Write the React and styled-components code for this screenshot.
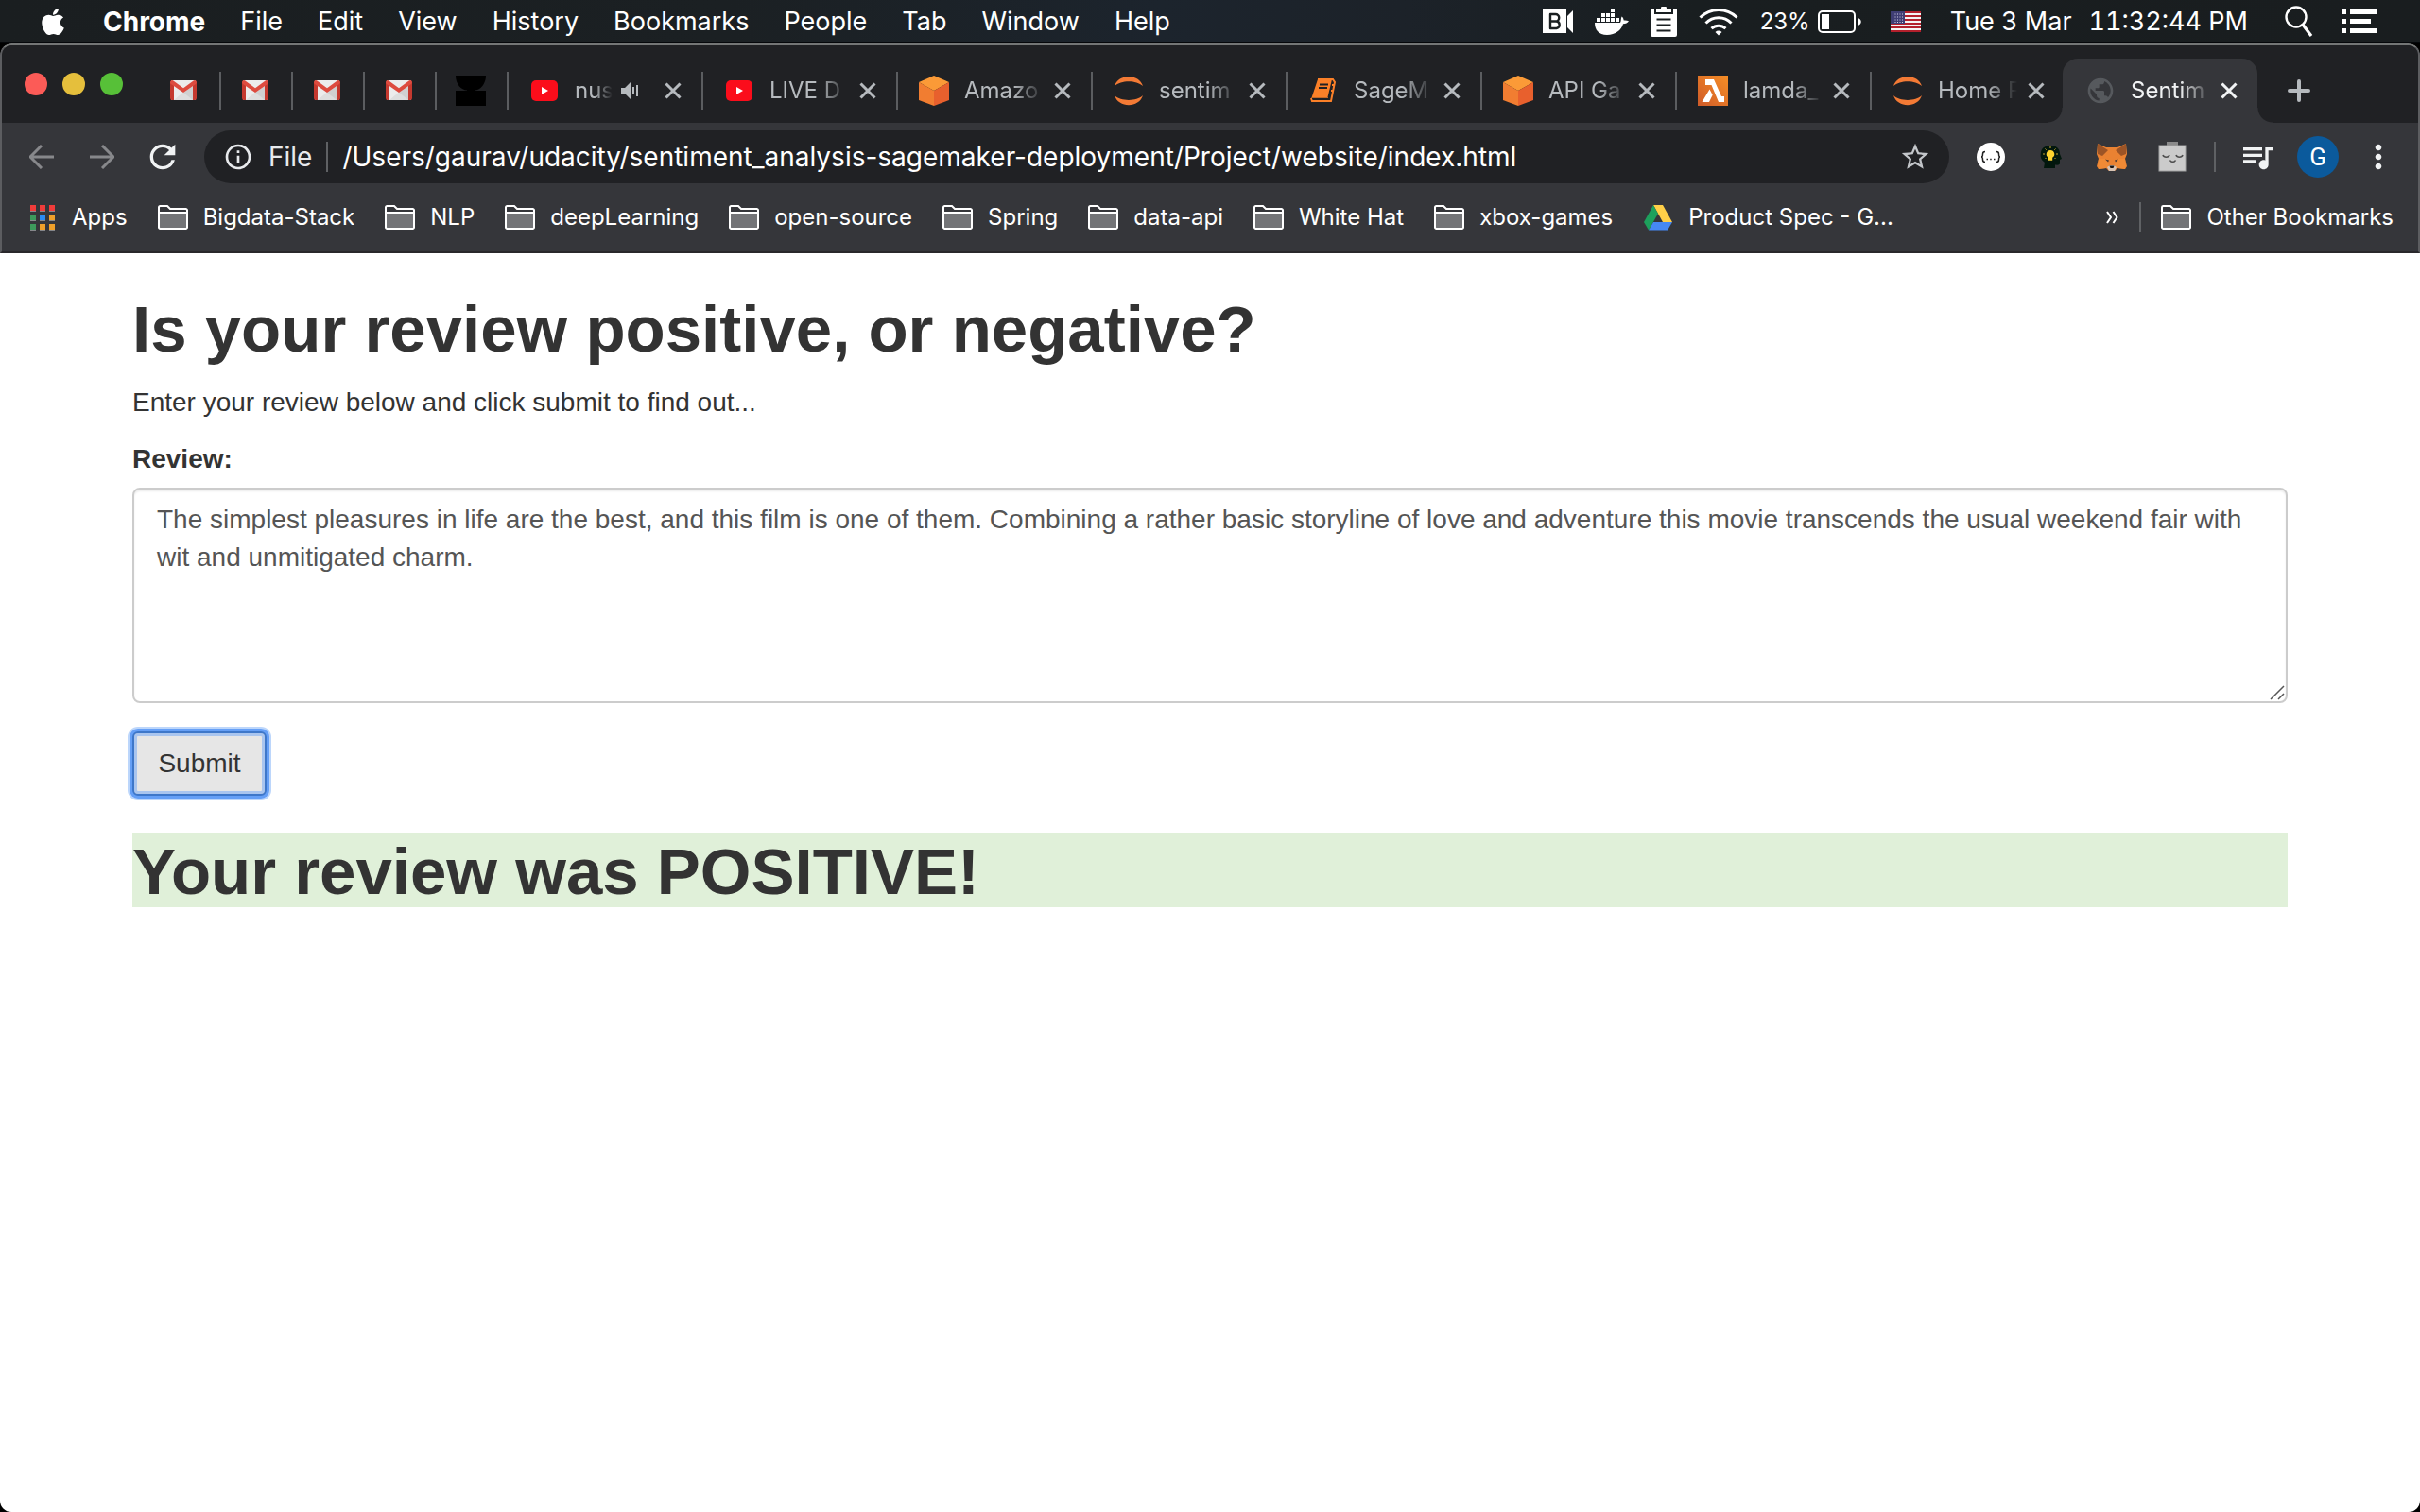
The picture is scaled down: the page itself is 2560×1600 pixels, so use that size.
import React, { useState } from "react";
import styled, { createGlobalStyle, css } from "styled-components";
import { FaApple } from "react-icons/fa";
import { MdInfoOutline, MdMoreVert, MdPublic, MdQueueMusic, MdRefresh, MdStarBorder } from "react-icons/md";

const GlobalStyle = createGlobalStyle`
  *, *::before, *::after { box-sizing: border-box; }
  body { margin: 0; background: #000; }
  svg { display: block; flex: none; }
`;

const uiFont = `Inter, Roboto, "Noto Sans", sans-serif`;
const pageFont = `"Liberation Sans", Arial, sans-serif`;

/* ---------- Desktop and menu bar ---------- */

const Desktop = styled.div`
  display: flex;
  flex-direction: column;
  min-height: 100vh;
  font-family: ${uiFont};
`;

const MenuBar = styled.header`
  display: flex;
  align-items: center;
  justify-content: space-between;
  height: 46px;
  padding: 2px 46px 0 40px;
  color: #fff;
  background: linear-gradient(90deg, #1a1e20 0%, #1b2023 30%, #1c242d 48%, #1c2229 58%, #191e20 70%, #191d1f 100%);
  border-bottom: 2px solid #05070a;
`;

const MenuList = styled.nav`
  display: flex;
  align-items: center;
  gap: 37px;
`;

const MenuItem = styled.button`
  padding: 0;
  border: 0;
  background: none;
  color: inherit;
  font: ${(p) => (p.$strong ? "700 28px" : "400 27px")} / 40px ${uiFont};
`;

const StatusArea = styled.div`
  display: flex;
  align-items: center;
  gap: 31px;
`;

const StatusIcons = styled.div`
  display: flex;
  align-items: center;
  gap: 23px;
`;

const Battery = styled.div`
  display: flex;
  align-items: center;
  gap: 8px;
  font-size: 24px;
  line-height: 40px;
`;

const Clock = styled.div`
  display: flex;
  gap: 18px;
  padding-right: 8px;
  font-size: 27px;
  line-height: 40px;
  font-variant-numeric: tabular-nums;
`;

/* ---------- Browser chrome ---------- */

const BrowserWindow = styled.div`
  flex: 1;
  display: flex;
  flex-direction: column;
  border-radius: 12px;
  overflow: hidden;
`;

const BrowserHead = styled.div`
  border: 2px solid #5c5d60;
  border-top-color: #747676;
  border-bottom-color: #29282b;
  border-radius: 12px 12px 0 0;
  background: #35363a;
  overflow: hidden;
`;

const TabStrip = styled.div`
  display: flex;
  align-items: flex-end;
  height: 82px;
  padding-left: 24px;
  background: #202124;
`;

const TrafficLights = styled.div`
  display: flex;
  gap: 16px;
  width: 132px;
  padding-bottom: 29px;
`;

const Light = styled.button`
  width: 24px;
  height: 24px;
  padding: 0;
  border: 0;
  border-radius: 50%;
  background: ${(p) => p.$color};
`;

const TabBase = styled.div`
  display: flex;
  align-items: center;
  flex: none;
  height: 68px;
  color: #b6babe;

  &::after {
    content: "";
    width: 2px;
    height: 40px;
    margin-left: auto;
    background: ${(p) => (p.$noDivider ? "transparent" : "#5b5d60")};
  }
`;

const PinnedTab = styled(TabBase)`
  width: 76px;
  padding-left: 20px;
`;

const Tab = styled(TabBase)`
  width: 206px;
  padding-left: 22px;
  ${(p) =>
    p.$active &&
    css`
      position: relative;
      margin-left: -4px;
      padding-left: 24px;
      color: #f1f3f4;
      background: #35363a;
      border-radius: 16px 16px 0 0;
    `}
`;

const TabFoot = styled.span`
  position: absolute;
  bottom: 0;
  ${(p) => p.$side}: -16px;
  width: 16px;
  height: 16px;
  background: radial-gradient(circle at ${(p) => (p.$side === "left" ? "0 0" : "100% 0")}, transparent 15px, #35363a 16px);
`;

const TabIcon = styled.span`
  display: flex;
  align-items: center;
  justify-content: center;
  width: 32px;
  height: 32px;
  flex: none;
`;

const TabTitle = styled.span`
  width: ${(p) => (p.$short ? 40 : 84)}px;
  margin-left: 16px;
  overflow: hidden;
  white-space: nowrap;
  font-size: 24px;
  line-height: 32px;
  mask-image: linear-gradient(90deg, #000 calc(100% - ${(p) => (p.$short ? 20 : 32)}px), transparent);
`;

const TabSound = styled.span`
  display: flex;
  justify-content: center;
  width: 44px;
  padding-right: 6px;
`;

const IconButton = styled.button`
  display: flex;
  align-items: center;
  justify-content: center;
  flex: none;
  width: ${(p) => p.$size || 64}px;
  height: 56px;
  padding: 0;
  border: 0;
  background: none;
  color: inherit;
`;

const NewTabButton = styled(IconButton)`
  height: 68px;
`;

const Toolbar = styled.div`
  display: flex;
  align-items: center;
  height: 72px;
  padding: 0 10px;
  color: #f1f3f4;
`;

const AddressBar = styled.form`
  flex: 1;
  display: flex;
  align-items: center;
  height: 56px;
  margin: 0 12px;
  padding: 0 4px 0 20px;
  border-radius: 28px;
  background: #202124;
  color: #e8eaed;
`;

const AddressLabel = styled.label`
  margin-left: 16px;
  font-size: 28px;
  line-height: 40px;
`;

const Divider = styled.span`
  flex: none;
  width: 2px;
  height: 32px;
  margin: 0 ${(p) => p.$gap}px;
  background: #5f6164;
`;

const AddressInput = styled.input`
  flex: 1;
  min-width: 0;
  padding: 0;
  border: 0;
  outline: 0;
  background: none;
  color: #fff;
  font: 400 28px / 40px ${uiFont};
`;

const Avatar = styled.span`
  display: flex;
  align-items: center;
  justify-content: center;
  width: 44px;
  height: 44px;
  border-radius: 50%;
  background: #0b5a9c;
  color: #fff;
  font: 400 26px / 44px Roboto, sans-serif;
`;

const BookmarkBar = styled.nav`
  display: flex;
  align-items: center;
  justify-content: space-between;
  height: 64px;
  padding: 0 26px 8px 30px;
  color: #fff;
`;

const BookmarkGroup = styled.div`
  display: flex;
  align-items: center;
  gap: ${(p) => p.$gap || 32}px;
`;

const Bookmark = styled.a`
  display: flex;
  align-items: center;
  gap: 16px;
  color: inherit;
  text-decoration: none;
  white-space: nowrap;
  font-size: 24px;
  line-height: 32px;
`;

/* ---------- Web page ---------- */

const Page = styled.main`
  flex: 1;
  padding: 40px 140px;
  background: #fff;
  color: #333;
  font: 400 28px / 40px ${pageFont};
`;

const Heading = styled.h1`
  margin: 0 0 20px;
  padding-top: 4px;
  font-size: 69px;
  line-height: 74px;
  font-weight: 700;
`;

const Result = styled(Heading)`
  margin-top: 40px;
  background: #e0f0d9;
`;

const Intro = styled.p`
  margin: 0 0 20px;
`;

const ReviewForm = styled.form`
  display: flex;
  flex-direction: column;
  align-items: flex-start;
`;

const FieldLabel = styled.label`
  margin-bottom: 10px;
  font-weight: 700;
`;

const ReviewField = styled.div`
  position: relative;
  width: 100%;
  margin-bottom: 30px;
`;

const ReviewBox = styled.textarea`
  display: block;
  width: 100%;
  padding: 12px 24px;
  border: 2px solid #ccc;
  border-radius: 8px;
  outline: 0;
  resize: none;
  background: #fff;
  color: #555;
  font: inherit;
  box-shadow: inset 0 2px 2px rgba(0, 0, 0, 0.075);
`;

const ResizeGrip = styled.svg`
  position: absolute;
  right: 3px;
  bottom: 3px;
`;

const SubmitButton = styled.button`
  min-width: 142px;
  padding: 12px 22px;
  border: 2px solid #3e77c9;
  border-radius: 6px;
  background: #e6e6e6;
  color: #333;
  font: inherit;
  box-shadow: 0 0 0 3px #659ff6, 0 0 0 5px #bcd6fb, inset 0 0 0 3px #a9c5ef;
`;

/* ---------- Icons ---------- */

const CamIcon = () => (
  <svg width="32" height="26" viewBox="0 0 32 26" fill="none">
    <path d="M0 0h25v25H0z" fill="#fff" />
    <path d="M32 1v24l-6-6V7z" fill="#fff" />
    <path d="M8 5h5.500a3.600 3.600 0 0 1 0 7.500H8zM8 12.500h6.500a3.800 3.800 0 0 1 0 7.500H8z" stroke="#1a1f21" strokeWidth="2.400" strokeLinejoin="round" />
  </svg>
);

const DockerIcon = () => (
  <svg width="36" height="28" viewBox="0 0 36 28" fill="#fff">
    <path d="M0 15h27c1-2 .5-4 1.500-6.500 1.500 1 2 2.500 2.200 4 1.800-.3 3.500 0 5.300.8-1.200 2-3.200 3-6 3C28 23 22 28 13 28 4 28 0 22.500 0 15z" />
    <path d="M2 10h4v4H2zM7 10h4v4H7zM12 10h4v4h-4zM17 10h4v4h-4zM22 10h4v4h-4zM7 5h4v4H7zM12 5h4v4h-4zM17 5h4v4h-4zM17 0h4v4h-4z" />
  </svg>
);

const ClipboardIcon = () => (
  <svg width="28" height="32" viewBox="0 0 28 32">
    <path d="M0 3h4v5h20V3h4v27a2 2 0 0 1-2 2H2a2 2 0 0 1-2-2z" fill="#fff" />
    <path d="M6 2h5a3 3 0 0 1 6 0h5v4H6z" fill="#fff" />
    <path d="M6.500 13.500h15M6.500 19.500h15M6.500 25.500h15" stroke="#1a1f21" strokeWidth="2" />
  </svg>
);

const WifiIcon = () => (
  <svg width="42" height="30" viewBox="0 0 42 30" fill="none" stroke="#fff" strokeWidth="3">
    <path d="M1.500 10.500a27.500 27.500 0 0 1 39 0M7.500 16.500a19 19 0 0 1 27 0M13.500 22.200a11 11 0 0 1 15 0" />
    <path d="M17.500 26a5 5 0 0 1 7 0L21 29.500z" fill="#fff" stroke="none" />
  </svg>
);

const BatteryIcon = () => (
  <svg width="46" height="24" viewBox="0 0 46 24">
    <rect x="1" y="1" width="38" height="22" rx="4" fill="none" stroke="#fff" strokeWidth="2" />
    <path d="M4 4h8v16H4zM42 8c5 1 5 7 0 8z" fill="#fff" />
  </svg>
);

const FlagIcon = () => (
  <svg width="32" height="22" viewBox="0 0 32 22">
    <rect width="32" height="22" fill="#f4f4f4" />
    <path d="M0 1h32M0 5h32M0 9h32M0 13h32M0 17h32M0 21h32" stroke="#b3202c" strokeWidth="2" />
    <rect width="15" height="13" fill="#3f3d73" />
    <path d="M2 3h12M2 6h12M2 9h12M2 11.500h12" stroke="#d5d4e6" strokeWidth="1" strokeDasharray="1 1.500" />
  </svg>
);

const SearchIcon = () => (
  <svg width="30" height="36" viewBox="0 0 30 36" fill="none" stroke="#fff">
    <circle cx="12" cy="13" r="10.500" strokeWidth="2.400" />
    <path d="M19 21l9 12" strokeWidth="3.200" />
  </svg>
);

const ListIcon = () => (
  <svg width="36" height="26" viewBox="0 0 36 26" fill="#fff">
    <path d="M0 0h4v5H0zM8 0h28v5H8zM0 10h4v5H0zM8 10h22v5H8zM0 20h4v5H0zM8 20h28v5H8z" />
  </svg>
);

const GmailIcon = () => (
  <svg width="28" height="22" viewBox="0 0 28 22">
    <rect x="1" width="26" height="21" rx="1" fill="#ececec" />
    <path d="M4 21l10-8.500L24 21z" fill="#dedede" />
    <path d="M14 13l10-7v15z" fill="#d0d0d0" />
    <path d="M0 2v17a2 2 0 0 0 2 2h2V5zM28 2v17a2 2 0 0 1-2 2h-2V5z" fill="#c5392f" />
    <path d="M0 2A2 2 0 0 1 3 .3L14 8.300 25 .3a2 2 0 0 1 3 1.700c0 1-.3 1.500-1 2L14 13 1 4C.3 3.500 0 3 0 2z" fill="#dd4b3f" />
  </svg>
);

const DarkIcon = () => (
  <svg width="32" height="32" viewBox="0 0 32 32">
    <path d="M0 0h32c0 9-6 15.500-12 15.500V16h12v16H0V16h12v-.5C6 15.500 0 9 0 0z" fill="#000" />
  </svg>
);

const YouTubeIcon = () => (
  <svg width="28" height="22" viewBox="0 0 28 22">
    <rect width="28" height="22" rx="5" fill="#fb0d1b" />
    <path d="M11 7l7 4-7 4z" fill="#fff" />
  </svg>
);

const CubeIcon = () => (
  <svg width="32" height="32" viewBox="0 0 32 32">
    <path d="M16 0l16 7-16 9L0 7z" fill="#fb9a37" />
    <path d="M0 7l16 9v16L0 26z" fill="#f17d31" />
    <path d="M32 7l-16 9v16l16-6z" fill="#e8602d" />
  </svg>
);

const JupyterIcon = () => (
  <svg width="32" height="32" viewBox="0 0 32 32" fill="#f37a35">
    <path d="M1 11C5-2.500 27-2.500 31 11 24 4.500 8 4.500 1 11zM1 21c4 13.500 26 13.500 30 0-7 6.500-23 6.500-30 0z" />
  </svg>
);

const NotebookIcon = () => (
  <svg width="28" height="26" viewBox="0 0 28 26">
    <path d="M8 1h15l-5 21H1z" fill="#fb8028" />
    <path d="M8 1h16l2 3-4 20H2l-1-3M19 21H4M25 7h-2M24 13h-2" fill="none" stroke="#fb8028" strokeWidth="2" />
    <path d="M10 6.500h9M9 10h9" stroke="#202124" strokeWidth="2" />
    <path d="M2 21.500h18" stroke="#202124" strokeWidth="1.500" />
  </svg>
);

const LambdaIcon = () => (
  <svg width="32" height="32" viewBox="0 0 32 32">
    <defs>
      <linearGradient id="lambda-fill" x1="0" y1="1" x2="1" y2="0">
        <stop offset="0" stopColor="#cf5b29" />
        <stop offset="1" stopColor="#f68e26" />
      </linearGradient>
    </defs>
    <rect width="32" height="32" fill="url(#lambda-fill)" />
    <path d="M8 4h9l8 18h3v6h-6L14.500 10H8zM12.500 14.500l3.200 6L12 28H4.500z" fill="#fff" />
  </svg>
);

const SoundIcon = () => (
  <svg width="20" height="18" viewBox="0 0 20 18" fill="#b6babe">
    <path d="M0 6h4l6-6v18l-6-6H0zM12 5h2v8h-2zM16 3h2v12h-2z" />
  </svg>
);

const CloseIcon = () => (
  <svg width="18" height="18" viewBox="0 0 18 18" stroke="currentColor" strokeWidth="3">
    <path d="M1.500 1.500l15 15M16.500 1.500l-15 15" />
  </svg>
);

const PlusIcon = () => (
  <svg width="24" height="24" viewBox="0 0 24 24" stroke="#b6babe" strokeWidth="4" strokeLinecap="round">
    <path d="M12 2v20M2 12h20" />
  </svg>
);

const ArrowIcon = ({ forward }) => (
  <svg width="26" height="26" viewBox="0 0 26 26" fill="none" stroke="#87888b" strokeWidth="3">
    <path d={forward ? "M0 13h24M13 1l12 12-12 12" : "M26 13H2M13 1L1 13l12 12"} />
  </svg>
);

const BracesIcon = () => (
  <svg width="32" height="32" viewBox="0 0 32 32" fill="none" stroke="#222" strokeWidth="1.500">
    <circle cx="16" cy="16" r="15" fill="#fff" stroke="none" />
    <path d="M10 10.500c-2 0-2.500.8-2.500 2.500s-.3 3-1.500 3c1.200 0 1.500 1.300 1.500 3s.5 2.500 2.500 2.500M22 10.500c2 0 2.500.8 2.500 2.500s.3 3 1.500 3c-1.200 0-1.500 1.300-1.500 3s-.5 2.500-2.500 2.500" />
    <path d="M11.500 18.500h1.500M15.200 18.500h1.500M19 18.500h1.500" />
  </svg>
);

const IdeaIcon = () => (
  <svg width="32" height="32" viewBox="0 0 32 32">
    <path d="M8 28l1-6c-4-3-5-6-4-11C6 6 10 4 15 4c6 0 10 3 10 9l2 5-2 1v4c0 1-1 2-5 1.500V28z" fill="#02170d" />
    <path d="M15 9a4.200 4.200 0 0 1 2.200 7.800v3h-4.400v-3A4.200 4.200 0 0 1 15 9z" fill="#fdd32f" />
    <path d="M15 5v2M9.500 7.500l1.200 1.200M20.500 7.500l-1.200 1.200M7 13h2M21 13h2M9.500 18l1-1M20.500 18l-1-1" stroke="#c9a92a" strokeWidth="1" />
  </svg>
);

const FoxIcon = () => (
  <svg width="32" height="30" viewBox="0 0 32 30">
    <path d="M1 1l9 4h12l9-4 1 11-2 5 2 8-2 3-8-1-3 3h-6l-3-3-8 1-2-3 2-8-2-5z" fill="#ea8232" />
    <path d="M1 1l11 7-6 6-5-2zM31 1l-11 7 6 6 5-2z" fill="#9c5426" />
    <path d="M2 17h9l2 7-3 3-8 1-1-4zM30 17h-9l-2 7 3 3 8 1 1-4z" fill="#f08a35" />
    <path d="M9 17.500l4 1-1 2zM23 17.500l-4 1 1 2z" fill="#4b3a33" />
    <path d="M11 26l3-2h4l3 2-2 4h-6z" fill="#d8c4b5" />
    <path d="M13.500 24.500h5l-1 2.500h-3z" fill="#1a1614" />
  </svg>
);

const RobotIcon = () => (
  <svg width="30" height="32" viewBox="0 0 30 32" fill="none">
    <path d="M9 0h12v5H9z" fill="#8b8b8b" />
    <rect x="1" y="4" width="28" height="27" fill="#cbcbcb" stroke="#a2a2a2" />
    <path d="M5 14c1 3 6 3 7 0M19 14c1 3 6 3 7 0M12.500 19.500c1 2.500 5 2.500 6 0" stroke="#4e4e4e" strokeWidth="1.600" />
  </svg>
);

const AppsIcon = () => {
  const colors = ["#f03c3a", "#f03c3a", "#f03c3a", "#3d9a5b", "#2c8bf2", "#efa02a", "#3d9a5b", "#efa02a", "#efa02a"];
  return (
    <svg width="28" height="27" viewBox="0 0 28 27">
      {colors.map((color, i) => (
        <g key={i}>
          <rect x={(i % 3) * 10} y={Math.floor(i / 3) * 10} width="6" height="7" fill="#85868a" />
          <rect x={(i % 3) * 10} y={Math.floor(i / 3) * 10} width="6" height="6" fill={color} />
        </g>
      ))}
    </svg>
  );
};

const FolderIcon = () => (
  <svg width="32" height="26" viewBox="0 0 32 26">
    <path d="M1 8V2.500A1.500 1.500 0 0 1 2.500 1H10l3 3h16.500A1.500 1.500 0 0 1 31 5.500V8z" fill="#35363a" stroke="#fff" strokeWidth="2" />
    <path d="M1 8h30v15.500a1.500 1.500 0 0 1-1.500 1.500h-27A1.500 1.500 0 0 1 1 23.500z" fill="#737477" stroke="#fff" strokeWidth="2" />
  </svg>
);

const DriveIcon = () => (
  <svg width="32" height="28" viewBox="0 0 32 28">
    <path d="M11 1h10l10 18H21z" fill="#ffcf48" />
    <path d="M11 1l5 9L6 27.500 1 19z" fill="#1da05c" />
    <path d="M11 19h20l-5 8.500H6z" fill="#4688f4" />
  </svg>
);

const MoreIcon = () => (
  <svg width="14" height="14" viewBox="0 0 14 14" fill="none" stroke="#fff" strokeWidth="2">
    <path d="M1 1l4 6-4 6M7.500 1l4 6-4 6" />
  </svg>
);

/* ---------- Data ---------- */

const menus = ["File", "Edit", "View", "History", "Bookmarks", "People", "Tab", "Window", "Help"];

const pinned = [
  ["Inbox 1", GmailIcon],
  ["Inbox 2", GmailIcon],
  ["Inbox 3", GmailIcon],
  ["Inbox 4", GmailIcon],
  ["Pinned", DarkIcon],
];

const tabs = [
  { title: "nus", icon: YouTubeIcon, playing: true },
  { title: "LIVE D", icon: YouTubeIcon },
  { title: "Amazo", icon: CubeIcon },
  { title: "sentim", icon: JupyterIcon },
  { title: "SageM", icon: NotebookIcon },
  { title: "API Ga", icon: CubeIcon },
  { title: "lamda_", icon: LambdaIcon },
  { title: "Home P", icon: JupyterIcon, noDivider: true },
  { title: "Sentim", icon: () => <MdPublic size={32} color="#56595d" />, active: true, noDivider: true },
];

const bookmarks = [
  ["Apps", AppsIcon],
  ["Bigdata-Stack", FolderIcon],
  ["NLP", FolderIcon],
  ["deepLearning", FolderIcon],
  ["open-source", FolderIcon],
  ["Spring", FolderIcon],
  ["data-api", FolderIcon],
  ["White Hat", FolderIcon],
  ["xbox-games", FolderIcon],
  ["Product Spec - G...", DriveIcon],
];

const extensions = [
  ["JSON viewer", BracesIcon],
  ["Ideas", IdeaIcon],
  ["Wallet", FoxIcon],
  ["Assistant", RobotIcon],
];

const initialUrl = "/Users/gaurav/udacity/sentiment_analysis-sagemaker-deployment/Project/website/index.html";
const initialReview =
  "The simplest pleasures in life are the best, and this film is one of them. Combining a rather basic storyline of love and adventure this movie transcends the usual weekend fair with wit and unmitigated charm.";

/* ---------- Sections ---------- */

const SystemMenu = () => (
  <MenuBar>
    <MenuList>
      <MenuItem aria-label="Apple menu">
        <FaApple size={32} />
      </MenuItem>
      <MenuItem $strong>Chrome</MenuItem>
      {menus.map((name) => (
        <MenuItem key={name}>{name}</MenuItem>
      ))}
    </MenuList>
    <StatusArea>
      <StatusIcons>
        <CamIcon />
        <DockerIcon />
        <ClipboardIcon />
        <WifiIcon />
        <Battery>
          23%
          <BatteryIcon />
        </Battery>
      </StatusIcons>
      <FlagIcon />
      <Clock>
        <span>Tue 3 Mar</span>
        <span>11:32:44 PM</span>
      </Clock>
      <SearchIcon />
      <ListIcon />
    </StatusArea>
  </MenuBar>
);

const Tabs = () => (
  <TabStrip>
    <TrafficLights>
      <Light $color="#fc5b57" aria-label="Close window" />
      <Light $color="#e5bf3c" aria-label="Minimise window" />
      <Light $color="#57c038" aria-label="Zoom window" />
    </TrafficLights>
    {pinned.map(([name, Icon]) => (
      <PinnedTab key={name} aria-label={name}>
        <TabIcon>
          <Icon />
        </TabIcon>
      </PinnedTab>
    ))}
    {tabs.map(({ title, icon: Icon, playing, active, noDivider }) => (
      <Tab key={title} $active={active} $noDivider={noDivider}>
        {active && <TabFoot $side="left" />}
        {active && <TabFoot $side="right" />}
        <TabIcon>
          <Icon />
        </TabIcon>
        <TabTitle $short={playing}>{title}</TabTitle>
        {playing && (
          <TabSound>
            <SoundIcon />
          </TabSound>
        )}
        <IconButton $size={40} aria-label={`Close ${title}`}>
          <CloseIcon />
        </IconButton>
      </Tab>
    ))}
    <NewTabButton $size={88} aria-label="New tab">
      <PlusIcon />
    </NewTabButton>
  </TabStrip>
);

const AddressRow = () => {
  const [url, setUrl] = useState(initialUrl);
  return (
    <Toolbar>
      <IconButton aria-label="Back">
        <ArrowIcon />
      </IconButton>
      <IconButton aria-label="Forward">
        <ArrowIcon forward />
      </IconButton>
      <IconButton aria-label="Reload">
        <MdRefresh size={40} />
      </IconButton>
      <AddressBar onSubmit={(e) => e.preventDefault()}>
        <MdInfoOutline size={32} />
        <AddressLabel htmlFor="address">File</AddressLabel>
        <Divider $gap={15} />
        <AddressInput id="address" value={url} onChange={(e) => setUrl(e.target.value)} />
        <IconButton type="button" aria-label="Bookmark this page">
          <MdStarBorder size={34} color="#c3c6ca" />
        </IconButton>
      </AddressBar>
      {extensions.map(([name, Icon]) => (
        <IconButton key={name} aria-label={name}>
          <Icon />
        </IconButton>
      ))}
      <Divider $gap={12} />
      <IconButton aria-label="Media controls">
        <MdQueueMusic size={40} />
      </IconButton>
      <IconButton aria-label="Profile">
        <Avatar>G</Avatar>
      </IconButton>
      <IconButton aria-label="Menu">
        <MdMoreVert size={40} />
      </IconButton>
    </Toolbar>
  );
};

const Bookmarks = () => (
  <BookmarkBar>
    <BookmarkGroup>
      {bookmarks.map(([name, Icon]) => (
        <Bookmark key={name} href="#">
          <Icon />
          {name}
        </Bookmark>
      ))}
    </BookmarkGroup>
    <BookmarkGroup $gap={21}>
      <MoreIcon />
      <Divider $gap={0} />
      <Bookmark href="#">
        <FolderIcon />
        Other Bookmarks
      </Bookmark>
    </BookmarkGroup>
  </BookmarkBar>
);

const ReviewPage = () => {
  const [review, setReview] = useState(initialReview);
  return (
    <Page>
      <Heading>Is your review positive, or negative?</Heading>
      <Intro>Enter your review below and click submit to find out...</Intro>
      <ReviewForm onSubmit={(e) => e.preventDefault()}>
        <FieldLabel htmlFor="review">Review:</FieldLabel>
        <ReviewField>
          <ReviewBox id="review" rows={5} spellCheck={false} value={review} onChange={(e) => setReview(e.target.value)} />
          <ResizeGrip width="16" height="16" viewBox="0 0 16 16" stroke="#555" strokeWidth="1.500" aria-hidden="true">
            <path d="M1 15L15 1M9 15l6-6" />
          </ResizeGrip>
        </ReviewField>
        <SubmitButton type="submit">Submit</SubmitButton>
      </ReviewForm>
      <Result>Your review was POSITIVE!</Result>
    </Page>
  );
};

export default function App() {
  return (
    <Desktop>
      <GlobalStyle />
      <SystemMenu />
      <BrowserWindow>
        <BrowserHead>
          <Tabs />
          <AddressRow />
          <Bookmarks />
        </BrowserHead>
        <ReviewPage />
      </BrowserWindow>
    </Desktop>
  );
}
